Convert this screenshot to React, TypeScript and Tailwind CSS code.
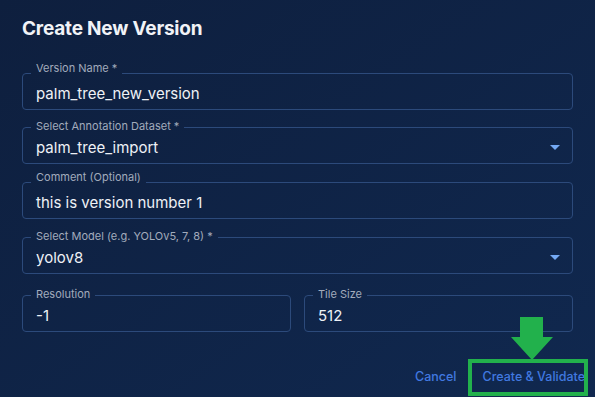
import React from 'react'

type FieldProps = {
  label: string
  value: string
  select?: boolean
  raised?: boolean
  className?: string
}

function Field({ label, value, select, raised, className = '' }: FieldProps) {
  return (
    <fieldset
      className={`min-w-0 border border-[#2c4a7b] rounded-[4px] pl-[8px] pr-[12px] ${className}`}
    >
      <legend className="px-[5px] text-[11px] leading-[12px] text-[#a2abbc]">
        <span className={raised ? 'relative -top-[5px]' : 'relative -top-[1px]'}>{label}</span>
      </legend>
      <div className="flex items-center h-[30px] pl-[5px]">
        <span className="flex-1 text-[15px] text-[#eef1f6] leading-none relative -top-[1px]">
          {value}
        </span>
        {select && (
          // MUI style drop-down caret
          <svg width="10" height="5" viewBox="0 0 10 5" className="relative -top-[1px]">
            <path d="M0 0h10L5 5z" fill="#74a9f4" />
          </svg>
        )}
      </div>
    </fieldset>
  )
}

export default function App() {
  return (
    <div
      className="relative w-[595px] h-[397px] overflow-hidden bg-gradient-to-br from-[#0e1f3e] to-[#10284f]"
      style={{ fontFamily: 'Inter, "Noto Sans", sans-serif' }}
    >
      <div className="px-[22px] pt-[17px]">
        <h1 className="text-[19px] leading-[24px] font-bold text-[#f1f3f7] tracking-[-0.2px]">
          Create New Version
        </h1>

        {/* Form */}
        <div className="mt-[26px] flex flex-col">
          <Field label="Version Name *" value="palm_tree_new_version" raised />
          <Field
            className="mt-[11px]"
            label="Select Annotation Dataset *"
            value="palm_tree_import"
            select
          />
          <Field
            className="mt-[12px]"
            label="Comment (Optional)"
            value="this is version number 1"
            raised
          />
          <Field
            className="mt-[12px]"
            label="Select Model (e.g. YOLOv5, 7, 8) *"
            value="yolov8"
            select
          />
          <div className="mt-[15px] grid grid-cols-2 gap-[13px]">
            <Field label="Resolution" value="-1" />
            <Field label="Tile Size" value="512" />
          </div>
        </div>
      </div>

      {/* Actions */}
      <div className="absolute right-[10px] bottom-[10px] flex items-center gap-[26px] text-[12.5px] font-medium text-[#4179e0]">
        <button type="button">Cancel</button>
        <button type="button">Create &amp; Validate</button>
      </div>

      {/* Annotation overlay: green box + arrow */}
      <div className="absolute left-[468px] top-[359px] w-[120px] h-[37px] border-[4px] border-[#22b14c]" />
      <svg className="absolute left-[511px] top-[317px]" width="42" height="44" viewBox="0 0 42 44">
        <path d="M9 0h23v20h10L21 43 0 20h9z" fill="#22b14c" />
      </svg>
    </div>
  )
}
